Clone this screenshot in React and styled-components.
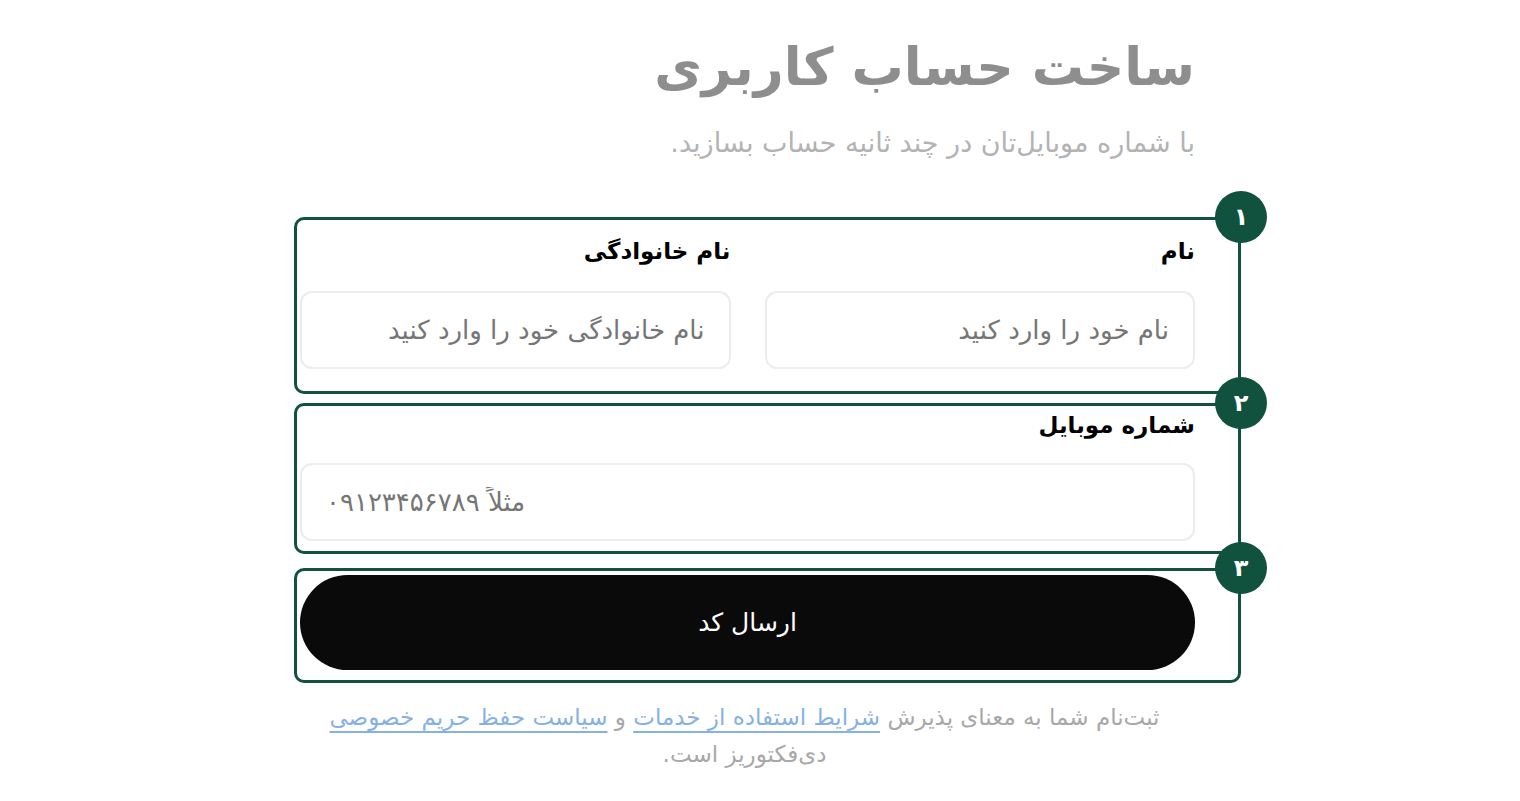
import React from 'react';
import styled, { createGlobalStyle } from 'styled-components';

const GlobalStyle = createGlobalStyle`
  html, body {
    margin: 0;
    padding: 0;
    background: #ffffff;
  }
  body {
    font-family: "DejaVu Sans", "Noto Sans", sans-serif;
  }
`;

const Page = styled.div`
  direction: rtl;
  width: 1520px;
  height: 801px;
  display: flex;
  justify-content: flex-start;
`;

const Column = styled.div`
  width: 947px;
  margin-right: 279px;
  padding-top: 32px;
  display: flex;
  flex-direction: column;
`;

const Intro = styled.div`
  padding-right: 46px;
  margin-bottom: 57px;
`;

const Title = styled.h1`
  margin: 0;
  font-size: 52px;
  line-height: 70px;
  font-weight: 700;
  color: #8e8e8e;
`;

const Subtitle = styled.p`
  margin: 24px 0 0;
  font-size: 27px;
  line-height: 34px;
  color: #b3b3b3;
`;

const Step = styled.section`
  position: relative;
  border: 3px solid #11523f;
  border-radius: 10px;
  padding: ${p => p.$pad};
  margin-bottom: ${p => p.$gap || 0}px;
`;

const Badge = styled.span`
  position: absolute;
  top: -29px;
  right: -29px;
  width: 52px;
  height: 52px;
  border-radius: 50%;
  background: #11523f;
  color: #ffffff;
  font-size: 24px;
  font-weight: 700;
  display: flex;
  align-items: center;
  justify-content: center;
`;

const Row = styled.div`
  display: grid;
  grid-template-columns: 1fr 1fr;
  column-gap: 34px;
`;

const Field = styled.label`
  display: flex;
  flex-direction: column;
`;

const Label = styled.span`
  font-size: 23px;
  line-height: 30px;
  font-weight: 700;
  color: #000000;
  margin-bottom: ${p => p.$space}px;
`;

const Input = styled.input`
  box-sizing: border-box;
  height: 78px;
  width: 100%;
  border: 2px solid #ececec;
  border-radius: 12px;
  padding: 0 24px;
  font-family: inherit;
  font-size: 26px;
  color: #333;
  background: #fff;
  outline: none;
  direction: rtl;
  text-align: ${p => p.$align || 'right'};
  &::placeholder {
    color: #767676;
  }
`;

const Submit = styled.button`
  width: 100%;
  height: 95px;
  border: none;
  border-radius: 48px;
  background: #0a0a0a;
  color: #ffffff;
  font-family: inherit;
  font-size: 25px;
  cursor: pointer;
`;

const Terms = styled.p`
  margin: 16px 0 0;
  padding-right: 46px;
  text-align: center;
  font-size: 23px;
  line-height: 37px;
  color: #a8a8a8;
`;

const Link = styled.a`
  color: #86b1e6;
  text-decoration: underline;
  text-underline-offset: 6px;
  text-decoration-thickness: 1.5px;
`;

export default function App() {
  return (
    <>
      <GlobalStyle />
      <Page>
        <Column>
          <Intro>
            <Title>ساخت حساب کاربری</Title>
            <Subtitle>با شماره موبایل‌تان در چند ثانیه حساب بسازید.</Subtitle>
          </Intro>

          <Step $pad="16px 43px 22px 3px" $gap={9}>
            <Badge>۱</Badge>
            <Row>
              <Field>
                <Label $space={25}>نام</Label>
                <Input placeholder="نام خود را وارد کنید" />
              </Field>
              <Field>
                <Label $space={25}>نام خانوادگی</Label>
                <Input placeholder="نام خانوادگی خود را وارد کنید" />
              </Field>
            </Row>
          </Step>

          <Step $pad="4px 43px 10px 3px" $gap={14}>
            <Badge>۲</Badge>
            <Field>
              <Label $space={23}>شماره موبایل</Label>
              <Input $align="left" placeholder="مثلاً ۰۹۱۲۳۴۵۶۷۸۹" />
            </Field>
          </Step>

          <Step $pad="4px 43px 10px 3px">
            <Badge>۳</Badge>
            <Submit>ارسال کد</Submit>
          </Step>

          <Terms>
            ثبت‌نام شما به معنای پذیرش <Link href="#">شرایط استفاده از خدمات</Link> و{' '}
            <Link href="#">سیاست حفظ حریم خصوصی</Link>
            <br />
            دی‌فکتوریز است.
          </Terms>
        </Column>
      </Page>
    </>
  );
}
